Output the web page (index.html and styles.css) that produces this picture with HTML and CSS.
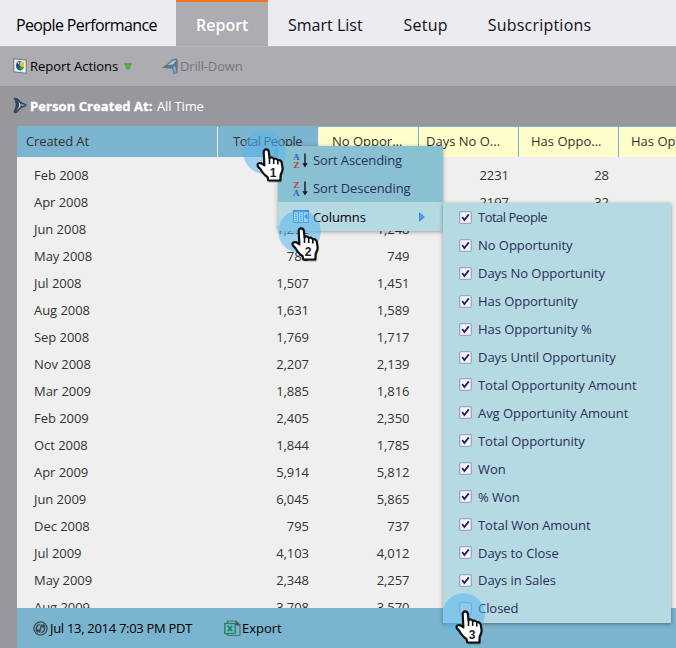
FILE: index.html
```
<!DOCTYPE html>
<html lang="en">
<head>
<meta charset="utf-8">
<title>People Performance</title>
<link rel="stylesheet" href="styles.css">
</head>
<body>
<svg class="defs" width="0" height="0">
  <defs>
    <symbol id="check" viewBox="0 0 13 13"><rect x=".7" y=".7" width="11.6" height="11.6" rx="1.2" fill="#f4f5fc" stroke="#9ba5c5" stroke-width="1.3"/><path d="M3.2 6.2 5.4 9 9.8 3.4" fill="none" stroke="#26284e" stroke-width="1.9"/></symbol>
    <symbol id="empty" viewBox="0 0 13 13"><rect x=".7" y=".7" width="11.6" height="11.6" rx="1.2" fill="#d7e4f5" stroke="#9ba5c5" stroke-width="1.3"/></symbol>
    <symbol id="hand" viewBox="0 0 44 58">
      <circle cx="21.5" cy="21.5" r="21.3" fill="#58b7ee" fill-opacity=".55"/>
      <path d="M20.700 21.500c-.3-4 4.800-4.200 5.200-.3l.6 6c1.400-1.300 3.700-.8 4.200.8 1.500-1 3.600-.3 4.100 1.300 1.700-.6 3.500.4 3.900 2.200l.9 5.500c.4 3-1.400 4.700-2 7l-.2 5.500H25.300l-.8-3.500c-3.500-2-5.400-4.700-7.300-8.200-1.500-1.500-3-2.200-2.700-4.200.5-2 3.500-1.800 5.200-.5l1.700 1.200Z" class="hand-shadow"/>
      <path d="M20.700 21.500c-.3-4 4.800-4.200 5.200-.3l.6 6c1.400-1.300 3.700-.8 4.200.8 1.500-1 3.600-.3 4.100 1.300 1.700-.6 3.500.4 3.900 2.200l.9 5.500c.4 3-1.400 4.700-2 7l-.2 5.500H25.300l-.8-3.500c-3.500-2-5.400-4.700-7.300-8.200-1.500-1.500-3-2.200-2.700-4.200.5-2 3.500-1.800 5.200-.5l1.700 1.200Z" fill="#fff" stroke="#111" stroke-width="2.200" stroke-linejoin="round"/>
      <path d="M26.500 27v6M30.700 28v5M34.800 29.500v4" stroke="#111" stroke-width="1.600"/>
    </symbol>
  </defs>
</svg>
<div class="app">
  <nav class="tabs">
    <span class="tab title"><span class="t-people">People Performance</span></span>
    <span class="tab active"><span class="t-report">Report</span></span>
    <span class="tab"><span class="t-smart">Smart List</span></span>
    <span class="tab"><span class="t-setup">Setup</span></span>
    <span class="tab"><span class="t-subs">Subscriptions</span></span>
  </nav>
  <div class="toolbar">
    <svg class="ico-report" width="14" height="16" viewBox="0 0 14 16"><path d="M.7.700 13.300 1.900v13.300L.7 13.800Z" fill="#e6eef2" stroke="#65808c" stroke-width="1.100"/><ellipse cx="7" cy="7.700" rx="4" ry="4.800" fill="#17508c"/><path d="M7.500 2.900c3 0 4 3 3.400 6L8.500 9.500 6.500 7Z" fill="#f0c32c"/><path d="M6.500 8.500 10.600 9.300c-.7 2.200-2 3.400-4 3.200Z" fill="#3f9b45"/><path d="M4 4.800 6.500 3.700 6 6.500Z" fill="#9ed4ee"/></svg>
    <span class="tool actions">Report Actions</span>
    <svg class="caret" width="8" height="7" viewBox="0 0 8 7"><path d="M.7.700h6.600L4.500 6.300h-1Z" fill="#58bd35" stroke="#3b932b" stroke-width=".8"/></svg>
    <svg class="ico-drill" width="17" height="17" viewBox="0 0 17 17"><path d="M.3 9.200 4.500 6.500 10 1.800C12 .5 15.500.6 15.800 1.500L15.500 15l-3.800 1.200-1.500-5.500-5.700-.5L.5 10Z" fill="#5f7689"/><path d="m5.500 7 5.500-4.300 3.500-.5-3.700 4.300Z" fill="#b6c9d4"/><path d="m12 8.500 1.500 6" stroke="#6fabd4" stroke-width="2.400"/></svg>
    <span class="tool drill">Drill-Down</span>
  </div>
  <div class="filter">
    <svg width="14" height="17" viewBox="0 0 14 17"><path d="M.7 1.200C3-.2 5.500 1.500 7.500 4.500l5.800 2.700v2L8.500 11 3.500 16C1.500 17 .3 15.500.6 14 3.400 10 3.400 6 .7 1.200Z" fill="#34425a"/><path d="M4 3c3.200 3.500 2.500 7.500-.7 10.500C6 12 8 9.800 7.800 7.500Z" fill="#bccbdc"/><path d="m8 6.500 4.500 1.700L8.500 9.300Z" fill="#8398b2"/></svg>
    <b class="f-label">Person Created At:</b><span class="f-value">All Time</span>
  </div>
  <main class="report">
    <div class="thead">
      <span class="th blue first">Created At</span><span class="th blue people">Total People</span><span class="th noopp">No Oppor...</span><span class="th daysno">Days No O...</span><span class="th has">Has Oppo...</span><span class="th has">Has Op</span>
    </div>
    <div class="rows">
      <div class="row"><span>Feb 2008</span><span></span><span></span><span>2231</span><span>28</span></div>
      <div class="row"><span>Apr 2008</span><span></span><span></span><span>2197</span><span>32</span></div>
      <div class="row"><span>Jun 2008</span><span>1,292</span><span>1,248</span></div>
      <div class="row"><span>May 2008</span><span>786</span><span>749</span></div>
      <div class="row"><span>Jul 2008</span><span>1,507</span><span>1,451</span></div>
      <div class="row"><span>Aug 2008</span><span>1,631</span><span>1,589</span></div>
      <div class="row"><span>Sep 2008</span><span>1,769</span><span>1,717</span></div>
      <div class="row"><span>Nov 2008</span><span>2,207</span><span>2,139</span></div>
      <div class="row"><span>Mar 2009</span><span>1,885</span><span>1,816</span></div>
      <div class="row"><span>Feb 2009</span><span>2,405</span><span>2,350</span></div>
      <div class="row"><span>Oct 2008</span><span>1,844</span><span>1,785</span></div>
      <div class="row"><span>Apr 2009</span><span>5,914</span><span>5,812</span></div>
      <div class="row"><span>Jun 2009</span><span>6,045</span><span>5,865</span></div>
      <div class="row"><span>Dec 2008</span><span>795</span><span>737</span></div>
      <div class="row"><span>Jul 2009</span><span>4,103</span><span>4,012</span></div>
      <div class="row"><span>May 2009</span><span>2,348</span><span>2,257</span></div>
      <div class="row"><span>Aug 2009</span><span>3,708</span><span>3,570</span></div>
    </div>
    <footer class="status">
      <svg width="15" height="15" viewBox="0 0 15 15"><circle cx="7.500" cy="7.500" r="6.600" fill="none" stroke="#37474e" stroke-width="1.200"/><path d="M6.700 3.500C3.500 4 2.500 7 4.200 9.800M2.700 9.300l2 1.700.9-2.600M8.300 11.500c3.200-.5 4.200-3.500 2.500-6.300M12.300 5.700l-2-1.700-.9 2.600M8.500 3.500 6.500 11.500" fill="none" stroke="#37474e" stroke-width="1.500"/></svg>
      <span class="date">Jul 13, 2014 7:03 PM PDT</span>
      <svg class="ico-xls" width="17" height="17" viewBox="0 0 17 17"><path d="M3.500 3V1h8.500l4 4v10.500H3.500V14" fill="none" stroke="#566b72" stroke-width="1.200"/><path d="M11.500.5v5h5Z" fill="#4a555a"/><rect x=".8" y="3.500" width="10.400" height="10" fill="#7bb4ce" stroke="#16885a" stroke-width="1.300"/><path d="m3.700 5.800 4.600 5.400m0-5.400-4.600 5.400" stroke="#16885a" stroke-width="1.700"/></svg>
      <span class="export">Export</span>
    </footer>
  </main>

  <div class="menu">
    <div class="mi"><svg width="15" height="17" viewBox="0 0 15 17"><text x="0" y="7.500" class="az" fill="#3354c4">A</text><text x=".5" y="15.500" class="az" fill="#c8373c">Z</text><path d="M12 1.500v12" stroke="#15171f" stroke-width="1.400"/><path d="M9.300 11.200h5.400L12 15.500Z" fill="#15171f"/></svg><span class="m-asc">Sort Ascending</span></div>
    <div class="mi"><svg width="15" height="17" viewBox="0 0 15 17"><text x=".5" y="7.500" class="az" fill="#c8373c">Z</text><text x="0" y="15.500" class="az" fill="#3354c4">A</text><path d="M12 1.500v12" stroke="#15171f" stroke-width="1.400"/><path d="M9.300 11.200h5.400L12 15.500Z" fill="#15171f"/></svg><span class="m-desc">Sort Descending</span></div>
    <div class="mi hover"><svg width="16" height="13" viewBox="0 0 16 13"><rect x=".5" y=".5" width="15" height="12" fill="#e5f1ff" stroke="#4583d8"/><path d="M.5 1.500h15" stroke="#4583d8" stroke-width="1.500"/><path d="M5.500 1v11M10.500 1v11" stroke="#5f97df"/><path d="M2 4.500h2M2 6.500h2M2 8.500h2M2 10.500h2M7 4.500h2M7 6.500h2M7 8.500h2M7 10.500h2" stroke="#5f97df"/><path d="M14.500 3.500v6L11.300 6.500Z" fill="#2664c6"/></svg><span class="m-col">Columns</span><svg class="arrow" width="6" height="10" viewBox="0 0 6 10"><path d="M.5.800 5.300 5 .5 9.200Z" fill="#4f9df0" stroke="#2f7fdc" stroke-width=".8"/></svg></div>
  </div>
  <div class="submenu">
    <div class="opt"><svg><use href="#check"/></svg><span class="o-total">Total People</span></div>
    <div class="opt"><svg><use href="#check"/></svg><span>No Opportunity</span></div>
    <div class="opt"><svg><use href="#check"/></svg><span>Days No Opportunity</span></div>
    <div class="opt"><svg><use href="#check"/></svg><span>Has Opportunity</span></div>
    <div class="opt"><svg><use href="#check"/></svg><span>Has Opportunity %</span></div>
    <div class="opt"><svg><use href="#check"/></svg><span>Days Until Opportunity</span></div>
    <div class="opt"><svg><use href="#check"/></svg><span>Total Opportunity Amount</span></div>
    <div class="opt"><svg><use href="#check"/></svg><span>Avg Opportunity Amount</span></div>
    <div class="opt"><svg><use href="#check"/></svg><span>Total Opportunity</span></div>
    <div class="opt"><svg><use href="#check"/></svg><span>Won</span></div>
    <div class="opt"><svg><use href="#check"/></svg><span>% Won</span></div>
    <div class="opt"><svg><use href="#check"/></svg><span>Total Won Amount</span></div>
    <div class="opt"><svg><use href="#check"/></svg><span>Days to Close</span></div>
    <div class="opt"><svg><use href="#check"/></svg><span>Days in Sales</span></div>
    <div class="opt"><svg><use href="#empty"/></svg><span>Closed</span></div>
  </div>
  <div class="step s1"><svg><use href="#hand"/></svg><b>1</b></div>
  <div class="step s2"><svg><use href="#hand"/></svg><b>2</b></div>
  <div class="step s3"><svg><use href="#hand"/></svg><b>3</b></div>
</div>
</body>
</html>
```
FILE: styles.css
```
* { box-sizing: border-box; }
body { margin: 0; font-family: "Open Sans", "Noto Sans", sans-serif; font-size: 13px; color: #333; }
.defs { position: absolute; }
.app { position: relative; width: 676px; height: 648px; overflow: hidden; background: #98979c; display: flex; flex-direction: column; white-space: nowrap; }
svg { flex: none; display: block; }

.tabs { height: 46px; flex: none; display: flex; background: #ecebf1; font-size: 16px; color: #111; }
.tab { padding: 2px 20px 0; line-height: 46px; }
.tab.title { width: 176px; padding-left: 16px; letter-spacing: -.62px; color: #000; }
.tab.active { width: 92px; background: #adacb1; border-top: 2px solid #ee7623; color: #fff; font-weight: 600; padding-top: 0; }
.t-setup { letter-spacing: .2px; margin-left: 1px; }
.t-subs { letter-spacing: .22px; }

.toolbar { height: 40px; flex: none; background: #adacb1; display: flex; align-items: center; padding: 0 0 1px 13px; color: #000; border-top: 1px solid #b6b5ba; }
.tool { line-height: 38px; }
.actions { width: 89px; margin-left: 3px; letter-spacing: -.05px; }
.caret { margin-left: 5px; }
.ico-drill { margin-left: 30px; }
.drill { color: #77767b; margin-left: 1px; letter-spacing: -.15px; }

.filter { height: 40px; flex: none; display: flex; align-items: center; padding: 0 0 1px 13px; color: #fff; }
.f-label { width: 123px; margin-left: 3px; letter-spacing: .08px; -webkit-text-stroke: .3px #fff; }
.f-value { margin-left: 4px; letter-spacing: -.15px; }

.report { margin-left: 17px; height: 522px; display: flex; flex-direction: column; background: #efefef; }
.thead { height: 31px; flex: none; display: flex; border-top: 1px solid #7bb4ce; overflow: hidden; line-height: 28px; }
.th { flex: none; width: 100px; background: #fffdca; border-right: 1px solid #7bb4ce; }
.th.blue { background: #7bb4ce; border-right-color: #efefef; }
.th.first { width: 201px; padding-left: 9px; letter-spacing: -.12px; }
.th.people { width: 101px; padding-left: 15px; letter-spacing: -.5px; }
.th.noopp { padding-left: 13px; }
.th.daysno { padding-left: 7px; }
.th.has { padding-left: 12px; }
.rows { height: 451px; flex: none; overflow: hidden; padding-top: 5px; }
.row { height: 27px; line-height: 27px; display: grid; grid-template-columns: 192px 100px 100.500px 99.500px 100px; text-align: right; letter-spacing: -.05px; }
.row span:first-child { text-align: left; padding-left: 17px; }
.status { height: 40px; flex: none; background: #7bb4ce; display: flex; align-items: center; padding-left: 16px; color: #000; }
.date { margin-left: 2px; width: 143px; letter-spacing: -.3px; }
.ico-xls { margin-left: 31px; }
.export { margin-left: 1px; }

.menu { position: absolute; left: 278px; top: 146px; width: 165px; height: 85px; background: #89c1d2; box-shadow: 0 1px 4px rgba(0,0,0,.35); color: #2b2d5b; }
.mi { height: 28px; display: flex; align-items: center; padding-left: 15px; }
.mi svg + span { margin-left: 5px; letter-spacing: -.1px; }
.mi.hover { height: 29px; background: #b6dae2; color: #000; }
.mi.hover svg + span { margin-left: 4px; }
.mi .arrow { margin-left: auto; margin-right: 18px; }
.az { font: bold 9px "Liberation Serif", serif; }

.submenu { position: absolute; left: 443px; top: 203px; width: 228px; height: 420px; background: #b6dae2; box-shadow: 0 1px 4px rgba(0,0,0,.4); color: #2b2d5b; padding-top: .5px; }
.opt { height: 27.930px; display: flex; align-items: center; padding-left: 16px; }
.opt svg { width: 13px; height: 13px; }
.opt span { margin-left: 6px; letter-spacing: -.05px; }
.opt .o-total { letter-spacing: -.5px; }

.step { position: absolute; width: 44px; height: 58px; }
.step svg { width: 44px; height: 58px; }
.step b { position: absolute; left: 24px; top: 35px; width: 12px; font: bold 12px "Liberation Sans", sans-serif; color: #222; text-align: center; }
.hand-shadow { fill: #000; opacity: .3; transform: translate(1px, 2px); }
.s1 { left: 243px; top: 131px; }
.s2 { left: 278px; top: 210px; }
.s3 { left: 442px; top: 593px; }
```
